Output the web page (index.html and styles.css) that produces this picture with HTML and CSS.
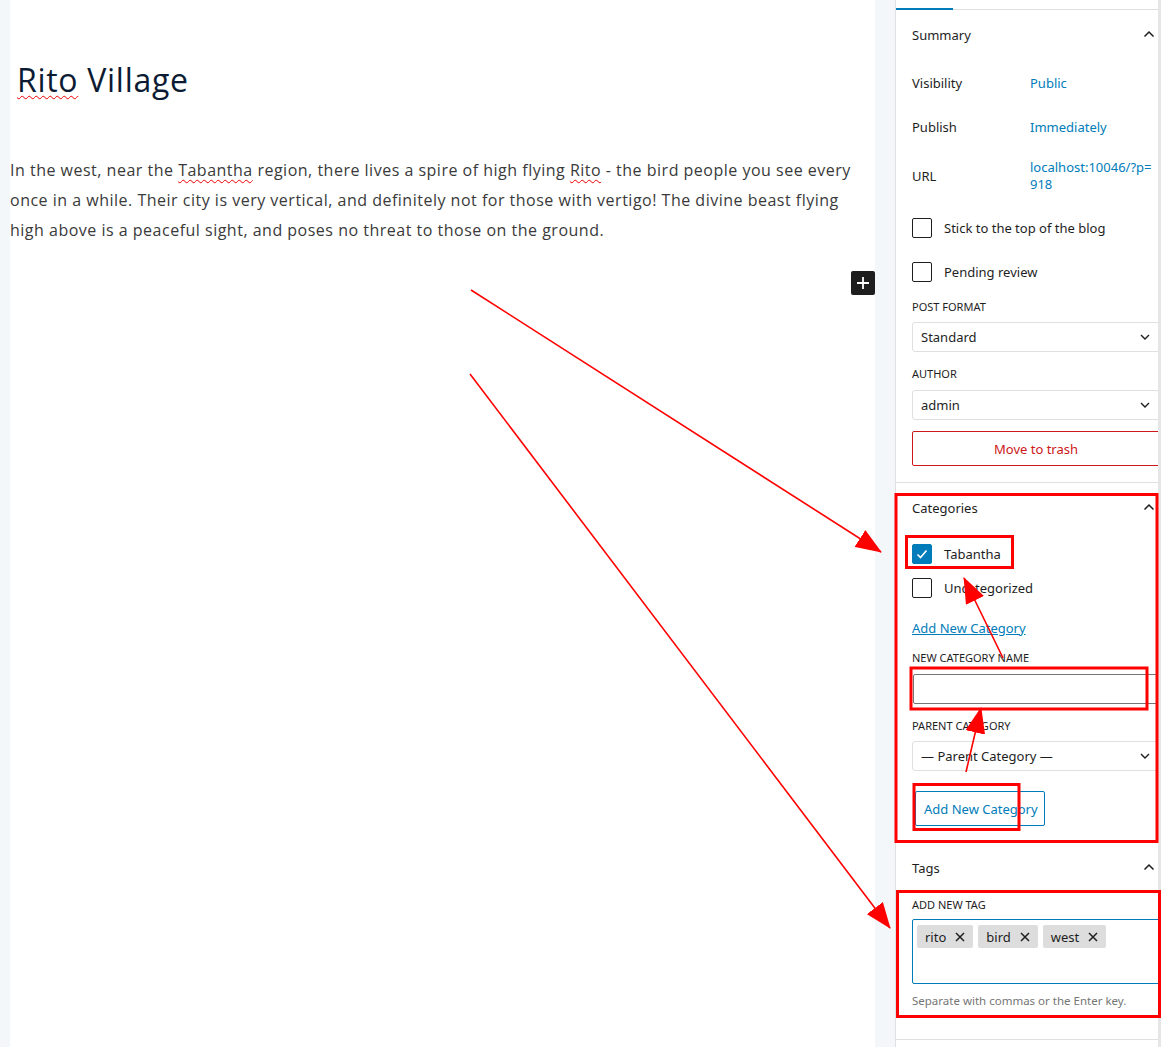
FILE: index.html
```html
<!DOCTYPE html>
<html lang="en">
<head>
<meta charset="utf-8">
<title>Rito Village</title>
<link rel="stylesheet" href="styles.css">
</head>
<body>
<div class="page">
  <div class="strip"></div>
  <main class="editor">
    <h1 class="title"><span class="typo">Rito</span> Village</h1>
    <p class="body-text">In the west, near the <span class="typo">Tabantha</span> region, there lives a spire of high flying <span class="typo">Rito</span> - the bird people you see every once in a while. Their city is very vertical, and definitely not for those with vertigo! The divine beast flying high above is a peaceful sight, and poses no threat to those on the ground.</p>
    <div class="inserter-row">
      <button class="inserter" aria-label="Add block">
        <svg width="16" height="16" viewBox="0 0 16 16"><path d="M8 2v12M2 8h12" stroke="#fff" stroke-width="1.8"/></svg>
      </button>
    </div>
  </main>
  <div class="gutter"></div>
  <aside class="sidebar">
    <div class="tabs"><span class="tab-active"></span></div>

    <section class="panel">
      <div class="panel-head"><span>Summary</span><svg class="chev" width="12" height="8" viewBox="0 0 12 8"><path d="M1.5 6.5L6 2l4.5 4.5" fill="none" stroke="#1e1e1e" stroke-width="1.5"/></svg></div>
      <div class="row row-first"><span class="lbl">Visibility</span><span class="val">Public</span></div>
      <div class="row"><span class="lbl">Publish</span><span class="val">Immediately</span></div>
      <div class="row row-url"><span class="lbl">URL</span><span class="val">localhost:10046/?p=<br>918</span></div>
      <label class="check first"><span class="box"></span><span>Stick to the top of the blog</span></label>
      <label class="check"><span class="box"></span><span>Pending review</span></label>
      <div class="cap cap-format">POST FORMAT</div>
      <div class="select"><span>Standard</span><svg width="10" height="6" viewBox="0 0 10 6"><path d="M1 1l4 4 4-4" fill="none" stroke="#1e1e1e" stroke-width="1.4"/></svg></div>
      <div class="cap cap-author">AUTHOR</div>
      <div class="select"><span>admin</span><svg width="10" height="6" viewBox="0 0 10 6"><path d="M1 1l4 4 4-4" fill="none" stroke="#1e1e1e" stroke-width="1.4"/></svg></div>
      <div class="trash">Move to trash</div>
    </section>

    <section class="panel panel-cats">
      <div class="panel-head"><span>Categories</span><svg class="chev" width="12" height="8" viewBox="0 0 12 8"><path d="M1.5 6.5L6 2l4.5 4.5" fill="none" stroke="#1e1e1e" stroke-width="1.5"/></svg></div>
      <label class="check cat cat-first"><span class="box checked"><svg width="14" height="14" viewBox="0 0 14 14"><path d="M2.5 7.5l3 3 6-7" fill="none" stroke="#fff" stroke-width="1.6"/></svg></span><span>Tabantha</span></label>
      <label class="check cat"><span class="box"></span><span>Uncategorized</span></label>
      <a class="link" href="#">Add New Category</a>
      <div class="cap cap-newcat">NEW CATEGORY NAME</div>
      <div class="input"></div>
      <div class="cap cap-parent">PARENT CATEGORY</div>
      <div class="select"><span>— Parent Category —</span><svg width="10" height="6" viewBox="0 0 10 6"><path d="M1 1l4 4 4-4" fill="none" stroke="#1e1e1e" stroke-width="1.4"/></svg></div>
      <div class="secondary">Add New Category</div>
    </section>

    <section class="panel panel-tags">
      <div class="panel-head"><span>Tags</span><svg class="chev" width="12" height="8" viewBox="0 0 12 8"><path d="M1.5 6.5L6 2l4.5 4.5" fill="none" stroke="#1e1e1e" stroke-width="1.5"/></svg></div>
      <div class="cap cap-tag">ADD NEW TAG</div>
      <div class="tagbox">
        <span class="chip">rito<svg width="10" height="10" viewBox="0 0 10 10"><path d="M1 1l8 8M9 1l-8 8" stroke="#1e1e1e" stroke-width="1.5"/></svg></span>
        <span class="chip">bird<svg width="10" height="10" viewBox="0 0 10 10"><path d="M1 1l8 8M9 1l-8 8" stroke="#1e1e1e" stroke-width="1.5"/></svg></span>
        <span class="chip">west<svg width="10" height="10" viewBox="0 0 10 10"><path d="M1 1l8 8M9 1l-8 8" stroke="#1e1e1e" stroke-width="1.5"/></svg></span>
      </div>
      <div class="help">Separate with commas or the Enter key.</div>
    </section>
    <div class="scroll"></div>
  </aside>
</div>

<svg class="annot" width="1161" height="1047" viewBox="0 0 1161 1047">
  <defs>
    <marker id="ah" markerUnits="userSpaceOnUse" markerWidth="26" markerHeight="20" refX="25" refY="10" orient="auto">
      <path d="M0 0L26 10L0 20z" fill="#f00"/>
    </marker>
  </defs>
  <g fill="none" stroke="#f00" stroke-width="3">
    <rect x="896" y="494.5" width="261" height="347"/>
    <rect x="906.5" y="536.5" width="106" height="31"/>
    <rect x="911" y="668" width="236" height="41"/>
    <rect x="914" y="784.5" width="105" height="45"/>
    <rect x="897.5" y="891.5" width="262" height="125"/>
  </g>
  <g stroke="#f00" stroke-width="1.6" fill="none" marker-end="url(#ah)">
    <line x1="471" y1="290" x2="881" y2="552"/>
    <line x1="470" y1="374" x2="890" y2="928"/>
    <line x1="1003" y1="658" x2="964" y2="578"/>
    <line x1="966" y1="772" x2="981" y2="708"/>
  </g>
</svg>
</body>
</html>
```

FILE: styles.css
```css
* { box-sizing: border-box; }
html, body { margin: 0; padding: 0; }
body {
  width: 1161px;
  height: 1047px;
  overflow: hidden;
  background: #fff;
  position: relative;
  font-family: "Noto Sans", "Open Sans", sans-serif;
  color: #1e1e1e;
}
.page {
  display: flex;
  height: 1047px;
}
.strip { width: 10px; flex: none; background: #f3f7fa; }
.gutter { width: 20px; flex: none; background: #f3f7fa; }
.editor {
  width: 865px;
  flex: none;
  background: #fff;
  font-family: "Open Sans", "Noto Sans", sans-serif;
}
.title {
  margin: 58px 0 0 7px;
  font-size: 32px;
  font-weight: 500;
  color: #0c1b33;
  line-height: 44px;
  letter-spacing: 0.7px;
}
.typo {
  text-decoration: underline wavy #e00;
  text-decoration-thickness: 1px;
  text-underline-offset: 3px;
}
.body-text {
  margin: 53px 0 0 0;
  width: 855px;
  font-size: 16px;
  line-height: 30px;
  letter-spacing: 0.5px;
  color: #3a3a3a;
}
.inserter-row {
  display: flex;
  justify-content: flex-end;
  margin-top: 26px;
}
.inserter {
  width: 24px; height: 24px;
  background: #1e1e1e;
  border: 0; border-radius: 2px;
  padding: 0;
  display: flex; align-items: center; justify-content: center;
}
.sidebar {
  width: 280px;
  flex: none;
  border-left: 1px solid #e0e0e0;
  background: #fff;
  position: relative;
  font-size: 13px;
}
.tabs {
  height: 10px;
  border-bottom: 1px solid #e0e0e0;
  position: relative;
}
.tab-active {
  position: absolute;
  left: 0; bottom: -1px;
  width: 57px; height: 2px;
  background: #007cba;
}
.panel {
  padding: 0 0 16px 16px;
  border-bottom: 1px solid #e0e0e0;
}
.panel-head {
  height: 50px;
  display: flex;
  align-items: center;
  justify-content: space-between;
  padding-right: 20px;
  font-size: 13px;
}
.chev { margin-top: -2px; }
.row {
  display: flex;
  height: 44px;
  align-items: center;
}
.row-first { margin-top: 1px; }
.lbl { width: 118px; flex: none; }
.val { color: #007cba; line-height: 17px; }
.row-url { height: 54px; }
.check {
  display: flex;
  align-items: center;
  gap: 12px;
  height: 44px;
}
.check.first { margin-top: 3px; }
.box {
  width: 20px; height: 20px;
  border: 1px solid #1e1e1e;
  border-radius: 2px;
  flex: none;
  display: flex; align-items: center; justify-content: center;
}
.box.checked { background: #007cba; border-color: #007cba; }
.cap {
  font-size: 11px;
  text-transform: uppercase;
  line-height: 16px;
}
.cap-format { margin-top: 5px; margin-bottom: 7px; }
.cap-author { margin-top: 14px; margin-bottom: 8px; }
.select {
  height: 30px;
  width: 248px;
  border: 1px solid #e0e0e0;
  border-radius: 3px;
  display: flex;
  align-items: center;
  justify-content: space-between;
  padding: 0 9px 0 8px;
  font-size: 13px;
}
.trash {
  margin-top: 11px;
  height: 35px;
  width: 248px;
  border: 1px solid #cc1818;
  border-radius: 2px;
  color: #cc1818;
  display: flex;
  align-items: center;
  justify-content: center;
}
.check.cat { height: 34px; }
.check.cat-first { margin-top: 4px; }
.link {
  display: block;
  margin-top: 14px;
  color: #007cba;
  text-decoration: underline;
  line-height: 18px;
}
.cap-newcat { margin-top: 13px; margin-bottom: 8px; }
.input {
  height: 30px;
  width: 248px;
  border: 1px solid #757575;
  border-radius: 2px;
  margin-left: 1px;
}
.cap-parent { margin-top: 14px; margin-bottom: 7px; }
.secondary {
  margin-top: 20px;
  margin-left: 3px;
  width: 130px;
  height: 35px;
  border: 1px solid #007cba;
  border-radius: 2px;
  color: #007cba;
  display: flex;
  align-items: center;
  padding-left: 8px;
}
.cap-tag { margin-top: 4px; margin-bottom: 6px; }
.tagbox {
  height: 65px;
  width: 250px;
  border: 1.5px solid #007cba;
  border-radius: 2px;
  padding: 5px 4px;
  display: flex;
  align-items: flex-start;
  gap: 5px;
}
.chip {
  background: #ddd;
  height: 23px;
  display: flex;
  align-items: center;
  gap: 9px;
  padding: 0 8px;
  font-size: 13px;
  border-radius: 2px;
}
.help {
  margin-top: 9px;
  font-size: 11.5px;
  color: #757575;
  line-height: 16px;
  padding-bottom: 14px;
}
.scroll {
  position: absolute;
  top: 0; left: 262px;
  width: 3px; height: 100%;
  background: #e6e6e6;
}
.annot {
  position: absolute;
  left: 0; top: 0;
  pointer-events: none;
}
```
